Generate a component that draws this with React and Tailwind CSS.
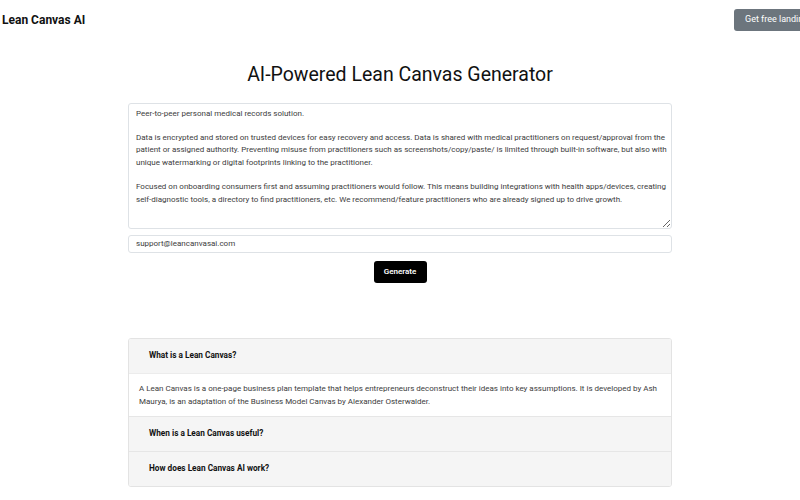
import React from 'react';

const idea = [
  'Peer-to-peer personal medical records solution.',
  '',
  'Data is encrypted and stored on trusted devices for easy recovery and access. Data is shared with medical practitioners on request/approval from the',
  'patient or assigned authority. Preventing misuse from practitioners such as screenshots/copy/paste/ is limited through built-in software, but also with',
  'unique watermarking or digital footprints linking to the practitioner.',
  '',
  'Focused on onboarding consumers first and assuming practitioners would follow. This means building integrations with health apps/devices, creating',
  'self-diagnostic tools, a directory to find practitioners, etc. We recommend/feature practitioners who are already signed up to drive growth.',
].join('\n');

const faqs = [
  {
    q: 'What is a Lean Canvas?',
    a: [
      'A Lean Canvas is a one-page business plan template that helps entrepreneurs deconstruct their ideas into key assumptions. It is developed by Ash',
      'Maurya, is an adaptation of the Business Model Canvas by Alexander Osterwalder.',
    ],
  },
  { q: 'When is a Lean Canvas useful?' },
  { q: 'How does Lean Canvas AI work?' },
];

export default function App() {
  return (
    <div className="w-[800px] h-[500px] overflow-hidden bg-white text-[#212529]" style={{ fontFamily: 'Roboto, "Liberation Sans", sans-serif' }}>
      {/* Nav */}
      <header className="flex items-center w-[880px] pl-[2px] pt-[9px]">
        <span className="w-[732px] shrink-0 text-[12px] font-bold text-[#111]">Lean Canvas AI</span>
        <button className="h-[22px] px-[11px] rounded-[3px] bg-[#6c757d] text-white text-[9px] whitespace-nowrap">
          Get free landing page
        </button>
      </header>

      {/* Main */}
      <main className="flex flex-col items-center mt-[34px]">
        <h1 className="text-[19.5px] font-normal text-[#111] leading-none">AI-Powered Lean Canvas Generator</h1>

        <div className="w-[544px] mt-[18px] flex flex-col items-center">
          <textarea
            readOnly
            wrap="off"
            defaultValue={idea}
            className="w-full h-[126px] px-[7px] py-[4px] border border-[#dee2e6] rounded-[3px] text-[8px] leading-[12.3px] text-[#3c3c3c] overflow-hidden resize-y outline-none"
          />
          <input
            readOnly
            defaultValue="support@leancanvasai.com"
            className="w-full h-[18px] mt-[6px] px-[7px] border border-[#dee2e6] rounded-[3px] text-[8px] text-[#3c3c3c] outline-none"
          />
          <button className="mt-[8px] h-[22px] w-[53px] rounded-[3px] bg-black text-white text-[8px] font-semibold">
            Generate
          </button>
        </div>

        {/* Accordion */}
        <div className="w-[544px] mt-[55px] border border-[#e3e3e3] rounded-[3px] overflow-hidden">
          {faqs.map((f, i) => (
            <div key={f.q} className={i > 0 ? 'border-t border-[#e6e6e6]' : ''}>
              <div className="h-[34px] flex items-center pl-[20px] bg-[#f5f5f5] text-[8.25px] font-bold text-[#111]">
                {f.q}
              </div>
              {f.a && (
                <div className="border-t border-[#ececec] px-[10px] py-[8px] text-[8px] leading-[13px] text-[#3c3c3c] bg-white whitespace-nowrap">
                  {f.a.map((line) => (
                    <div key={line}>{line}</div>
                  ))}
                </div>
              )}
            </div>
          ))}
        </div>
      </main>
    </div>
  );
}
